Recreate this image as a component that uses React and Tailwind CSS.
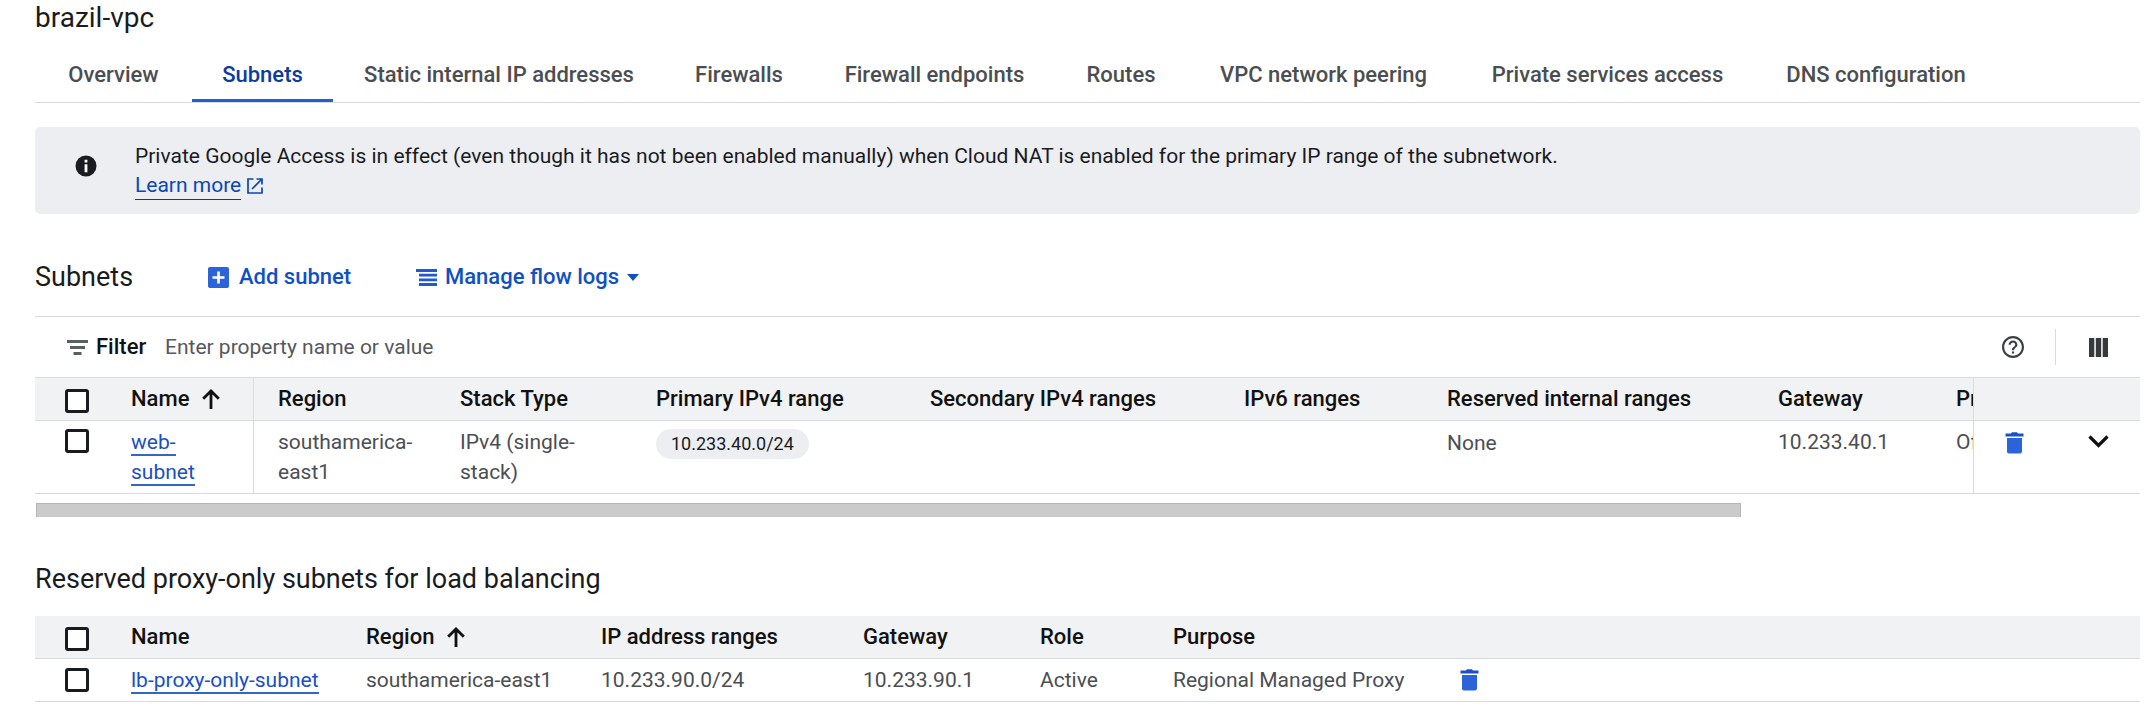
const tabs = [
  ['Overview', 'min-w-[157px]'],
  ['Subnets', 'min-w-[141px]'],
  ['Static internal IP addresses', 'min-w-[332px]'],
  ['Firewalls', 'min-w-[148px]'],
  ['Firewall endpoints', 'min-w-[243px]'],
  ['Routes', 'min-w-[130px]'],
  ['VPC network peering', 'min-w-[275px]'],
  ['Private services access', 'min-w-[293px]'],
  ['DNS configuration', 'min-w-[244px]'],
];

const linkClass = 'border-b-2 border-[#3367c0] text-[#1a4fc4] whitespace-nowrap';

function ArrowUp() {
  return (
    <svg className="h-5 w-[18px]" viewBox="0 0 18 20" fill="none" stroke="#111" strokeWidth="2.8" aria-hidden="true">
      <path d="M9 20V2M1.200 9.800L9 2l7.800 7.800" />
    </svg>
  );
}

function Trash() {
  return (
    <svg className="h-[22px] w-[19px]" viewBox="0 0 19 22" fill="#2b63d9" aria-hidden="true">
      <path d="M0.500 1.500H6L7 0.300h5l1 1.200h5.500v3H0.500z" fill="#1a50c8" />
      <path d="M2 6h15v13.500a2 2 0 0 1-2 2H4a2 2 0 0 1-2-2z" />
    </svg>
  );
}

function Check({ label }) {
  return <input type="checkbox" aria-label={label} className="block h-6 w-6 appearance-none rounded-[3px] border-[3px] border-[#1a1b1e] bg-white" />;
}

function Th({ children, className = '' }) {
  return <th scope="col" className={'border-b border-[#d8dadd] bg-[#f1f2f4] p-0 text-left text-[22px] font-[480] text-[#111] whitespace-nowrap ' + className}>{children}</th>;
}

function Td({ children, className = '' }) {
  return <td className={'border-b border-[#d8dadd] bg-white p-0 text-left ' + className}>{children}</td>;
}

export default function App() {
  return (
    <main className="bg-white pr-2 pl-[35px] font-['Roboto',sans-serif] text-[21px] leading-[30px] text-[#4b4e52]">
      <h1 className="h-[50px] pt-[3px] text-[28px] leading-[30px] text-[#1a1b1e]">brazil-vpc</h1>
      <nav className="flex h-[53px] border-b border-[#d8dadd]">
        {tabs.map(([t, width]) => (
          <a key={t} href="#" aria-current={t === 'Subnets' ? 'page' : undefined}
            className={'pt-[10px] text-center text-[22px] font-[480] whitespace-nowrap ' + width + (t === 'Subnets' ? ' border-b-[3px] border-[#1f5fd0] text-[#0d3c9e]' : ' text-[#4b4e50]')}>
            {t}
          </a>
        ))}
      </nav>
      <section className="mt-6 flex h-[87px] rounded-[5px] bg-[#edeef2] pt-[14px] pl-10 text-[#1a1b1e]">
        <svg className="mt-[14px] mr-[38px] size-[22px] shrink-0" viewBox="0 0 22 22" aria-hidden="true">
          <circle cx="11" cy="11" r="10.500" fill="#1b1c1f" />
          <path d="M9.600 4.800h2.800v2.600H9.600zM9.600 9.200h2.800v8H9.600z" fill="#fff" />
        </svg>
        <div>
          <p>Private Google Access is in effect (even though it has not been enabled manually) when Cloud NAT is enabled for the primary IP range of the subnetwork.</p>
          <a href="#" className="flex items-center gap-[6px] text-[#0b47b5]">
            <span className="border-b border-[#0b3a96] leading-[28px]">Learn more</span>
            <svg className="size-4" viewBox="0 0 16 16" fill="none" stroke="#0b47b5" strokeWidth="1.700" aria-hidden="true">
              <path d="M6.500 1H1v14h14V9.500M9.500 1H15v5.500M15 1L5 11" />
            </svg>
          </a>
        </div>
      </section>
      <div className="flex h-[102px] items-center pt-6">
        <h2 className="w-[173px] text-[27px] text-[#1a1b1e]">Subnets</h2>
        <button type="button" className="flex w-[208px] items-center gap-[10px] text-[22px] font-[480] text-[#0f50c4]">
          <svg className="size-[21px]" viewBox="0 0 21 21" aria-hidden="true">
            <rect width="21" height="21" rx="2" fill="#2b63d9" />
            <path d="M10.500 4.500v12M4.500 10.500h12" stroke="#fff" strokeWidth="2.600" />
          </svg>
          Add subnet
        </button>
        <button type="button" className="flex items-center gap-2 text-[22px] font-[480] text-[#0f50c4]">
          <svg className="h-[17px] w-[21px]" viewBox="0 0 21 17" fill="#1f5ad2" aria-hidden="true">
            <path d="M0 0h21v2.900H0zM3 4.700h18v2.900H3zM3 9.400h18v2.900H3zM3 14.100h18V17H3z" />
          </svg>
          Manage flow logs
          <svg className="h-[7px] w-3" viewBox="0 0 12 7" fill="#0f50c4" aria-hidden="true"><path d="M0 0h12L6 7z" /></svg>
        </button>
      </div>
      <div className="flex h-[61px] items-center border-t border-[#d8dadd] pl-8">
        <svg className="h-[15px] w-[21px]" viewBox="0 0 21 15" fill="#5b5e63" aria-hidden="true">
          <path d="M0 0h21v3H0zM3 6h15v3H3zM6.500 12h8v3h-8z" />
        </svg>
        <label htmlFor="filter" className="ml-2 w-[69px] text-[22px] font-medium text-[#111]">Filter</label>
        <input id="filter" type="text" placeholder="Enter property name or value" className="min-w-0 flex-1 outline-none placeholder:text-[#55585c]" />
        <button type="button" aria-label="Help" className="mr-[31px]">
          <svg className="size-[22px]" viewBox="2 2 20 20" fill="#3c3f43" aria-hidden="true">
            <path d="M11 18h2v-2h-2v2zm1-16C6.480 2 2 6.480 2 12s4.480 10 10 10 10-4.480 10-10S17.520 2 12 2zm0 18c-4.410 0-8-3.590-8-8s3.590-8 8-8 8 3.590 8 8-3.590 8-8 8zm0-14c-2.210 0-4 1.790-4 4h2c0-1.100.9-2 2-2s2 .9 2 2c0 2-3 1.750-3 5h2c0-2.250 3-2.500 3-5 0-2.210-1.790-4-4-4z" />
          </svg>
        </button>
        <span className="h-9 w-px bg-[#d8dadd]" />
        <button type="button" aria-label="Column display options" className="mr-8 ml-[33px]">
          <svg className="size-[19px]" viewBox="0 0 19 19" fill="#37393c" aria-hidden="true"><path d="M0 0h5.300v19H0zM6.800 0h5.400v19H6.800zM13.700 0H19v19h-5.300z" /></svg>
        </button>
      </div>
      <div className="overflow-hidden border-t border-[#d8dadd]">
        <table className="w-[2600px] table-fixed border-separate border-spacing-0">
          <colgroup>
            <col className="w-[96px]" /><col className="w-[123px]" /><col className="w-[206px]" /><col className="w-[196px]" /><col className="w-[274px]" /><col className="w-[314px]" /><col className="w-[203px]" /><col className="w-[331px]" /><col className="w-[178px]" /><col /><col className="w-[84px]" /><col className="w-[83px]" />
          </colgroup>
          <thead>
            <tr className="h-[43px]">
              <Th className="pt-[3px] pl-[30px]"><Check label="Select all subnets" /></Th>
              <Th className="border-r"><span className="flex items-center gap-[13px]">Name <ArrowUp /></span></Th>
              <Th className="pl-6">Region</Th>
              <Th>Stack Type</Th>
              <Th>Primary IPv4 range</Th>
              <Th>Secondary IPv4 ranges</Th>
              <Th>IPv6 ranges</Th>
              <Th>Reserved internal ranges</Th>
              <Th>Gateway</Th>
              <Th>Private Google Access</Th>
              <Th className="sticky right-[83px] border-l" />
              <Th className="sticky right-0" />
            </tr>
          </thead>
          <tbody>
            <tr className="h-[73px] align-top">
              <Td className="pt-[8px] pl-[30px]"><Check label="Select web-subnet" /></Td>
              <Td className="border-r pt-[6px]"><a href="#" className="block text-[#1a4fc4]"><span className={linkClass}>web-</span><br /><span className={linkClass}>subnet</span></a></Td>
              <Td className="pt-[6px] pl-6">southamerica-<br />east1</Td>
              <Td className="pt-[6px]">IPv4 (single-<br />stack)</Td>
              <Td className="pt-[7px]"><span className="inline-block rounded-full bg-[#edeef2] px-[15px] text-[18px] text-[#1a1b1e]">10.233.40.0/24</span></Td>
              <Td />
              <Td />
              <Td className="pt-[7px]">None</Td>
              <Td className="pt-[6px]">10.233.40.1</Td>
              <Td className="pt-[6px]">Off</Td>
              <Td className="sticky right-[83px] border-l pt-[11px] pl-[31px]"><button type="button" aria-label="Delete web-subnet" className="block"><Trash /></button></Td>
              <Td className="sticky right-0 pt-[14px] pl-[31px]">
                <button type="button" aria-label="Expand web-subnet" className="block">
                  <svg className="h-[13px] w-[21px]" viewBox="0 0 21 13" fill="none" stroke="#111" strokeWidth="3.2" aria-hidden="true"><path d="M1.500 1.500l9 9 9-9" /></svg>
                </button>
              </Td>
            </tr>
          </tbody>
        </table>
      </div>
      <div className="mt-[9px] ml-px h-[14px] w-[81%] border border-b-0 border-[#b5b5b5] bg-[#cbcbcb]" />
      <h2 className="mt-[47px] text-[27px] text-[#1a1b1e]">Reserved proxy-only subnets for load balancing</h2>
      <table className="mt-[22px] w-full table-fixed border-separate border-spacing-0">
        <colgroup>
          <col className="w-[96px]" /><col className="w-[235px]" /><col className="w-[235px]" /><col className="w-[262px]" /><col className="w-[177px]" /><col className="w-[133px]" /><col className="w-[287px]" /><col />
        </colgroup>
        <thead>
          <tr className="h-[43px]">
            <Th className="pt-[3px] pl-[30px]"><Check label="Select all proxy-only subnets" /></Th>
            <Th>Name</Th>
            <Th><span className="flex items-center gap-[13px]">Region <ArrowUp /></span></Th>
            <Th>IP address ranges</Th>
            <Th>Gateway</Th>
            <Th>Role</Th>
            <Th>Purpose</Th>
            <Th />
          </tr>
        </thead>
        <tbody>
          <tr className="h-[43px]">
            <Td className="pl-[30px]"><Check label="Select lb-proxy-only-subnet" /></Td>
            <Td><a href="#" className={linkClass}>lb-proxy-only-subnet</a></Td>
            <Td>southamerica-east1</Td>
            <Td>10.233.90.0/24</Td>
            <Td>10.233.90.1</Td>
            <Td>Active</Td>
            <Td>Regional Managed Proxy</Td>
            <Td><button type="button" aria-label="Delete lb-proxy-only-subnet" className="block"><Trash /></button></Td>
          </tr>
        </tbody>
      </table>
    </main>
  );
}
